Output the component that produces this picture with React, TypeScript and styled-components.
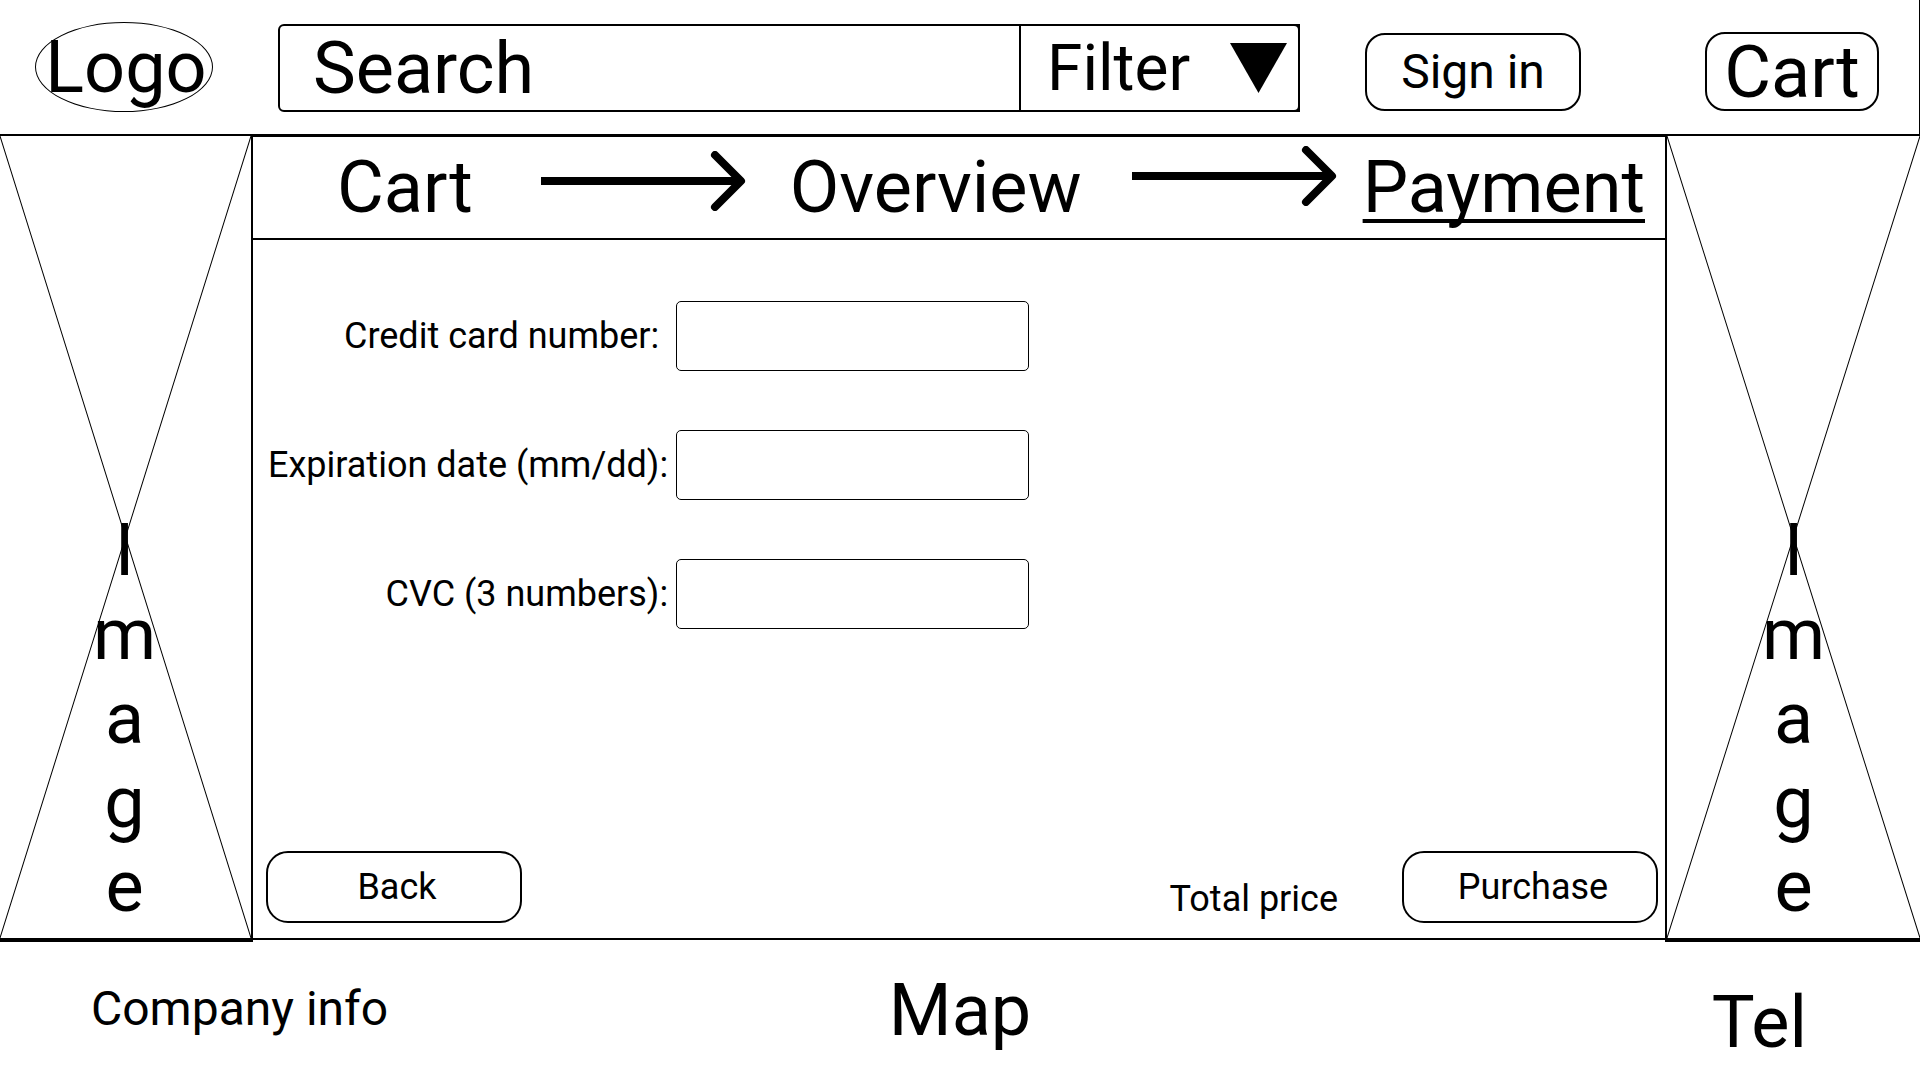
import React from "react";
import styled, { createGlobalStyle } from "styled-components";

const GlobalStyle = createGlobalStyle`
  *, *::before, *::after {
    box-sizing: border-box;
  }

  body {
    margin: 0;
    background: #fff;
    color: #000;
    font-family: Roboto, "Liberation Sans", sans-serif;
    font-size: 36px;
    line-height: 42px;
  }

  input, select, button {
    margin: 0;
    color: inherit;
    font: inherit;
  }

  a {
    color: inherit;
    text-decoration: none;
  }
`;

const Page = styled.div`
  display: flex;
  flex-direction: column;
  min-height: 100vh;
`;

const Header = styled.header`
  display: flex;
  align-items: flex-end;
  gap: 65px;
  padding: 22px 40px 22px 35px;
  border-right: 1px solid #000;
  border-bottom: 2px solid #000;
`;

const Logo = styled.a`
  display: flex;
  align-items: center;
  justify-content: center;
  width: 178px;
  height: 90px;
  padding: 2px 0 0 4px;
  border: 1px solid #000;
  border-radius: 50%;
  font-size: 72px;
  line-height: 84px;
`;

const SearchBox = styled.form`
  display: flex;
  flex: 1;
  gap: 2px;
  min-width: 0;
  height: 88px;
  border: 2px solid #000;
  border-radius: 6px 0 0 6px;
  background: #000;
`;

const SearchInput = styled.input`
  flex: 1;
  min-width: 0;
  padding: 2px 33px 0;
  border: 0;
  border-radius: 4px 0 0 4px;
  background: #fff;
  font-size: 72px;
  line-height: 84px;

  &::placeholder {
    color: #000;
    opacity: 1;
  }
`;

const Filter = styled.div`
  display: grid;
  align-items: center;
  width: 277px;
  border-radius: 0 4px 4px 0;
  background: #fff;
`;

const FilterSelect = styled.select`
  grid-area: 1 / 1;
  width: 100%;
  padding: 2px 0 0 26px;
  border: 0;
  background: transparent;
  font-size: 64px;
  line-height: 76px;
  appearance: none;
`;

const Triangle = styled.svg`
  grid-area: 1 / 1;
  justify-self: end;
  width: 57px;
  height: 50px;
  margin-right: 11px;
  pointer-events: none;
`;

const Actions = styled.div`
  display: flex;
  align-items: flex-end;
  gap: 124px;
  padding-bottom: 1px;
`;

const HeaderButton = styled.button<{ $large?: boolean }>`
  width: ${(p) => (p.$large ? 174 : 216)}px;
  height: ${(p) => (p.$large ? 79 : 78)}px;
  padding: ${(p) => (p.$large ? 2 : 0)}px 0 0;
  border: 2px solid #000;
  border-radius: 20px;
  background: #fff;
  font-size: ${(p) => (p.$large ? 72 : 48)}px;
  line-height: ${(p) => (p.$large ? 84 : 56)}px;
  display: flex;
  align-items: center;
  justify-content: center;
`;

const Main = styled.main`
  display: flex;
  flex: 1;
`;

const Side = styled.aside<{ $right?: boolean }>`
  position: relative;
  display: flex;
  flex: none;
  flex-direction: column;
  align-items: center;
  justify-content: flex-end;
  width: ${(p) => (p.$right ? 255 : 253)}px;
  padding-right: ${(p) => (p.$right ? 0 : 2)}px;
  padding-bottom: 9px;
  border: 0 solid #000;
  border-bottom-width: 4px;
  ${(p) => (p.$right ? "border-left-width" : "border-right-width")}: 2px;
  font-size: 72px;
  line-height: 84px;
`;

const Diagonals = styled.svg`
  position: absolute;
  inset: 0;
  width: 100%;
  height: 100%;
`;

const Panel = styled.section`
  display: flex;
  flex: 1;
  flex-direction: column;
  min-width: 0;
  margin-bottom: 2px;
  border: 0 solid #000;
  border-width: 1px 0 2px;
`;

const Steps = styled.nav`
  display: flex;
  align-items: center;
  height: 103px;
  padding: 0 20px 0 84px;
  border-bottom: 2px solid #000;
  font-size: 72px;
  line-height: 84px;
`;

const Step = styled.a<{ $current?: boolean }>`
  margin-left: ${(p) => (p.$current ? "auto" : 0)};
  text-decoration-line: ${(p) => (p.$current ? "underline" : "none")};
  text-decoration-thickness: 4px;
  text-decoration-skip-ink: none;
  text-underline-offset: 7px;
`;

const ArrowShape = styled.svg<{ $top: number; $before: number; $after: number }>`
  flex: none;
  align-self: flex-start;
  width: 205px;
  height: 60px;
  margin: ${(p) => p.$top}px ${(p) => p.$after}px 0 ${(p) => p.$before}px;
  fill: none;
  stroke: #000;
  stroke-width: 8;
  stroke-linejoin: round;
`;

const PaymentForm = styled.form`
  display: flex;
  flex: 1;
  flex-direction: column;
`;

const Fields = styled.div`
  display: grid;
  grid-template-columns: max-content 353px;
  gap: 59px 8px;
  align-items: center;
  justify-items: end;
  padding: 61px 15px;
`;

const FieldInput = styled.input`
  width: 100%;
  height: 70px;
  padding: 0 16px;
  border: 1px solid #000;
  border-radius: 5px;
  background: #fff;
`;

const FormActions = styled.div`
  display: flex;
  align-items: flex-end;
  margin-top: auto;
  padding: 0 7px 15px 13px;
`;

const FormButton = styled.button`
  width: 256px;
  height: 72px;
  padding: 0 0 0 6px;
  border: 2px solid #000;
  border-radius: 22px;
  background: #fff;
`;

const Total = styled.span`
  margin: 0 64px 3px auto;
`;

const Footer = styled.footer`
  display: grid;
  grid-template-columns: 1fr auto 1fr;
  align-items: start;
  padding: 27px 91px 15px;
`;

const FooterLink = styled.a<{ $small?: boolean; $drop?: boolean; $end?: boolean }>`
  justify-self: ${(p) => (p.$end ? "end" : "start")};
  padding-top: ${(p) => (p.$drop ? 12 : 0)}px;
  padding-right: ${(p) => (p.$end ? 22 : 0)}px;
  font-size: ${(p) => (p.$small ? 48 : 72)}px;
  line-height: ${(p) => (p.$small ? 56 : 84)}px;
`;

function Arrow({ top, before, after }: { top: number; before: number; after: number }) {
  return (
    <ArrowShape $top={top} $before={before} $after={after} viewBox="0 0 205 60" aria-hidden="true">
      <path d="M0 30H200" />
      <path d="M174 4L200 30L174 56" strokeLinecap="round" />
    </ArrowShape>
  );
}

function ImagePlaceholder({ right }: { right?: boolean }) {
  return (
    <Side $right={right}>
      <Diagonals viewBox="0 0 100 100" preserveAspectRatio="none" aria-hidden="true">
        <path d="M0 0L100 100M100 0L0 100" fill="none" stroke="#000" vectorEffect="non-scaling-stroke" />
      </Diagonals>
      {["I", "m", "a", "g", "e"].map((letter) => (
        <span key={letter}>{letter}</span>
      ))}
    </Side>
  );
}

const fields = [
  { id: "card-number", label: "Credit card number:\u00a0" },
  { id: "expiration", label: "Expiration date (mm/dd):" },
  { id: "cvc", label: "CVC (3 numbers):" },
];

export default function App() {
  return (
    <Page>
      <GlobalStyle />
      <Header>
        <Logo href="#">Logo</Logo>
        <SearchBox role="search">
          <SearchInput type="text" placeholder="Search" aria-label="Search" />
          <Filter>
            <FilterSelect aria-label="Filter">
              <option>Filter</option>
            </FilterSelect>
            <Triangle viewBox="0 0 57 50" aria-hidden="true">
              <path d="M0 0H57L28.5 50Z" />
            </Triangle>
          </Filter>
        </SearchBox>
        <Actions>
          <HeaderButton type="button">Sign in</HeaderButton>
          <HeaderButton type="button" $large>
            Cart
          </HeaderButton>
        </Actions>
      </Header>
      <Main>
        <ImagePlaceholder />
        <Panel>
          <Steps aria-label="Checkout steps">
            <Step href="#cart">Cart</Step>
            <Arrow top={14} before={68} after={44} />
            <Step href="#overview">Overview</Step>
            <Arrow top={9} before={50} after={0} />
            <Step href="#payment" $current aria-current="step">
              Payment
            </Step>
          </Steps>
          <PaymentForm>
            <Fields>
              {fields.map((field) => (
                <React.Fragment key={field.id}>
                  <label htmlFor={field.id}>{field.label}</label>
                  <FieldInput id={field.id} type="text" />
                </React.Fragment>
              ))}
            </Fields>
            <FormActions>
              <FormButton type="button">Back</FormButton>
              <Total>Total price</Total>
              <FormButton type="button">Purchase</FormButton>
            </FormActions>
          </PaymentForm>
        </Panel>
        <ImagePlaceholder right />
      </Main>
      <Footer>
        <FooterLink href="#company" $small $drop>
          Company info
        </FooterLink>
        <FooterLink href="#map">Map</FooterLink>
        <FooterLink href="#tel" $drop $end>
          Tel
        </FooterLink>
      </Footer>
    </Page>
  );
}
